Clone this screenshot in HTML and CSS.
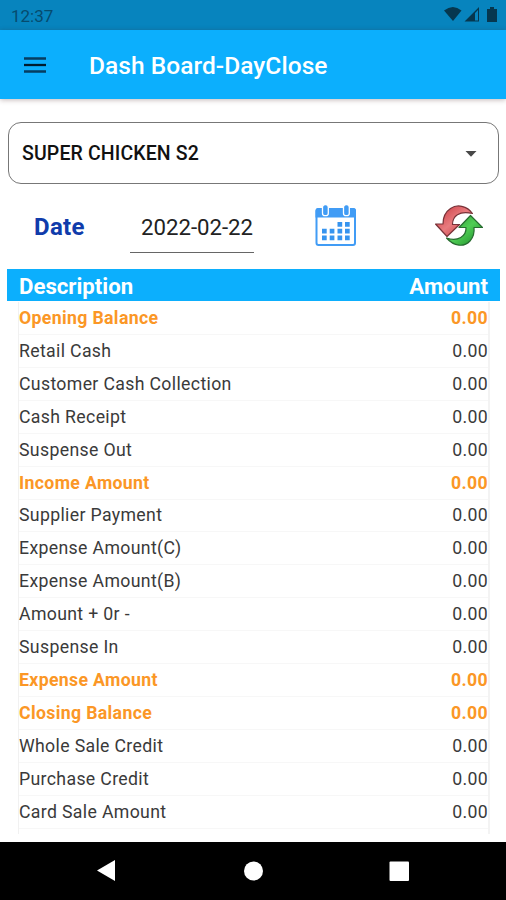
FILE: index.html
```html
<!DOCTYPE html>
<html lang="en">
<head>
<meta charset="utf-8">
<title>Dash Board-DayClose</title>
<link rel="stylesheet" href="styles.css">
</head>
<body>
<div class="status"><span class="clock">12:37</span>
<svg class="status-icons" width="54" height="18" viewBox="0 0 54 18"><g fill="#06374f"><path d="M0 4.500Q9-2.500 17.500 4.500L9 15Z"/><path fill-rule="evenodd" d="M20.500 15.500L35 1V15.500ZM31 7V14.500H34V4Z"/><path d="M43 3H46V1H50V3H53V16H43Z"/></g></svg></div>
<header class="appbar">
<svg class="menu" width="24" height="18" viewBox="0 0 24 18"><path d="M1 2.500H23M1 15.500H23" stroke="#063d60" stroke-width="2.300"/><path d="M1 9H23" stroke="#001c2e" stroke-width="2.300"/></svg>
<h1>Dash Board-DayClose</h1>
</header>
<main>
<div class="select"><span>SUPER CHICKEN S2</span><svg width="12" height="6" viewBox="0 0 12 6"><path d="M.5 0H11.500L6 5.700Z" fill="#484848"/></svg></div>
<div class="daterow">
<span class="label">Date</span>
<span class="date">2022-02-22</span>
<svg class="calendar" width="42" height="42" viewBox="0 0 42 42"><rect x="1.500" y="4" width="38.500" height="36" rx="2" fill="#fff" stroke="#419cf5" stroke-width="2"/><path d="M.5 12.500V6Q.5 3 3.500 3H38Q41 3 41 6V12.500Z" fill="#419cf5"/><g fill="#419cf5" stroke="#fff" stroke-width="1.300"><rect x="7.500" y="-.3" width="5.800" height="11" rx="2.500"/><rect x="28.500" y="-.3" width="5.800" height="11" rx="2.500"/></g><g fill="#3694ef"><path d="M22.500 17h4.700v4.700h-4.700zM30 17h4.700v4.700H30zM7 23.700h4.700v4.700H7zM14.700 23.700h4.700v4.700h-4.700zM22.500 23.700h4.700v4.700h-4.700zM30 23.700h4.700v4.700H30zM7 30.500h4.700v4.700H7zM14.700 30.500h4.700v4.700h-4.700zM22.500 30.500h4.700v4.700h-4.700zM30 30.500h4.700v4.700H30z"/></g></svg>
<svg class="refresh" width="50" height="42" viewBox="0 0 50 42"><defs><linearGradient id="r" x1="0" y1="0" x2="1" y2="1"><stop offset="0" stop-color="#c7333b"/><stop offset=".5" stop-color="#e87b7e"/><stop offset="1" stop-color="#bc2d36"/></linearGradient><linearGradient id="g" x1="0" y1="0" x2="1" y2="1"><stop offset="0" stop-color="#26922f"/><stop offset=".5" stop-color="#50cd55"/><stop offset="1" stop-color="#178724"/></linearGradient></defs><path d="M38.500 8.500C33 .5 23 -1 16.500 3.500C10.500 7.500 9 12.500 9 19H1.500L13 31.500L25.500 19.500H18.500C18.500 11 25 5.500 38.500 8.500Z" fill="url(#r)" stroke="#793339" stroke-width="1.200" stroke-linejoin="round"/><path d="M12.500 33C20 41.500 30 42.500 36 36C39.500 32 40.500 27 40 22.500H48.500L36.500 10.500L25 22.500H32C32.500 31 24 37 12.500 33Z" fill="url(#g)" stroke="#276c30" stroke-width="1.200" stroke-linejoin="round"/></svg>
</div>
<div class="thead"><span>Description</span><span>Amount</span></div>
<div class="rows">
<div class="row total"><span>Opening Balance</span><span>0.00</span></div>
<div class="row"><span>Retail Cash</span><span>0.00</span></div>
<div class="row"><span>Customer Cash Collection</span><span>0.00</span></div>
<div class="row"><span>Cash Receipt</span><span>0.00</span></div>
<div class="row"><span>Suspense Out</span><span>0.00</span></div>
<div class="row total"><span>Income Amount</span><span>0.00</span></div>
<div class="row"><span>Supplier Payment</span><span>0.00</span></div>
<div class="row"><span>Expense Amount(C)</span><span>0.00</span></div>
<div class="row"><span>Expense Amount(B)</span><span>0.00</span></div>
<div class="row"><span>Amount + 0r -</span><span>0.00</span></div>
<div class="row"><span>Suspense In</span><span>0.00</span></div>
<div class="row total"><span>Expense Amount</span><span>0.00</span></div>
<div class="row total"><span>Closing Balance</span><span>0.00</span></div>
<div class="row"><span>Whole Sale Credit</span><span>0.00</span></div>
<div class="row"><span>Purchase Credit</span><span>0.00</span></div>
<div class="row"><span>Card Sale Amount</span><span>0.00</span></div>
</div>
</main>
<nav class="navbar">
<svg width="506" height="58" viewBox="0 0 506 58"><path d="M97 28.500L115 18V39Z" fill="#fff"/><circle cx="253.500" cy="29" r="9.500" fill="#fff"/><rect x="389.500" y="19.500" width="19.500" height="19.500" rx="1" fill="#fff"/></svg>
</nav>
</body>
</html>
```
FILE: styles.css
```css
* { box-sizing: border-box; }
body { margin: 0; width: 506px; height: 900px; overflow: hidden; display: flex; flex-direction: column; background: #fff; font-family: Roboto, "Liberation Sans", sans-serif; white-space: nowrap; }
.status { height: 30px; flex: none; background: #0784be; display: flex; justify-content: space-between; align-items: center; padding: 2px 8px 0 11px; }
.clock { font-size: 17px; color: #064b6e; }
.status-icons { margin-top: -2px; }
.appbar { height: 69px; flex: none; background: #0caffd; display: flex; align-items: center; padding: 1px 0 0 23px; box-shadow: 0 1px 5px rgba(60, 20, 20, .3); }
.menu { margin-top: -1px; }
h1 { margin: 1px 0 0 42px; font-size: 24.500px; font-weight: 500; line-height: 30px; letter-spacing: .05px; color: #fff; }
main { flex: 1; min-height: 0; padding: 23px 6px 0 7px; }
.select { height: 62px; margin: 0 1px 0 1px; border: 1.500px solid #777; border-radius: 13px; display: flex; align-items: center; justify-content: space-between; padding: 1px 21px 0 13px; font-size: 19.500px; font-weight: 500; letter-spacing: .13px; color: #111; }
.daterow { height: 85px; display: flex; align-items: flex-start; }
.label { width: 96px; padding: 28px 0 0 27px; font-size: 24px; line-height: 30px; font-weight: 700; letter-spacing: .3px; color: #103cab; }
.date { margin: 28px 0 0 27px; width: 124px; height: 41px; padding-left: 11px; border-bottom: 1.500px solid #666; font-size: 22.200px; line-height: 30px; color: #222; }
.calendar { margin: 21px 0 0 61px; }
.refresh { margin: 21px 0 0 77px; }
.thead { width: 493px; height: 32px; background: #0caffd; display: flex; justify-content: space-between; align-items: center; padding: 1px 12px 0; font-size: 22.200px; font-weight: 700; color: #fff; }
.rows { margin: 1px 10px 0 11px; padding-bottom: 5px; border-left: 1px solid #f1f1f1; border-right: 2px solid #f3f3f3; }
.row { height: 32.930px; display: flex; justify-content: space-between; align-items: center; border-bottom: 1px solid #f7f7f7; font-size: 17.700px; letter-spacing: .34px; color: #3a3a3a; }
.total { font-weight: 700; color: #fb9726; }
.navbar { height: 58px; flex: none; background: #000; }
.navbar svg { display: block; }
```
